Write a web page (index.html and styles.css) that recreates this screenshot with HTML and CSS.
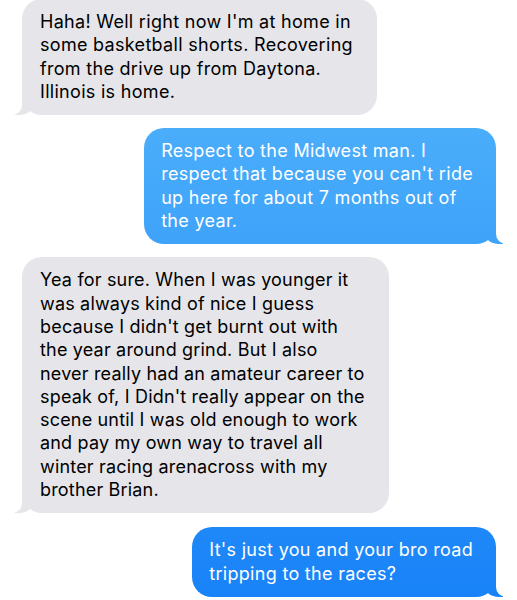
FILE: index.html
```html
<!DOCTYPE html>
<html>
<head>
<meta charset="utf-8">
<link rel="stylesheet" href="styles.css">
</head>
<body>
<div class="thread">
  <div class="bubble them first">Haha! Well right now I'm at home in<br>some basketball shorts. Recovering<br>from the drive up from Daytona.<br>Illinois is home.</div>
  <div class="bubble me">Respect to the Midwest man. I<br>respect that because you can't ride<br>up here for about 7 months out of<br>the year.</div>
  <div class="bubble them long">Yea for sure. When I was younger it<br>was always kind of nice I guess<br>because I didn't get burnt out with<br>the year around grind. But I also<br>never really had an amateur career to<br>speak of, I Didn't really appear on the<br>scene until I was old enough to work<br>and pay my own way to travel all<br>winter racing arenacross with my<br>brother Brian.</div>
  <div class="bubble me last">It's just you and your bro road<br>tripping to the races?</div>
</div>
</body>
</html>
```
FILE: styles.css
```css
html, body {
  margin: 0;
  padding: 0;
  background: #ffffff;
}
body {
  font-family: Inter, "Liberation Sans", sans-serif;
  font-size: 18px;
  line-height: 23.3px;
  width: 517px;
  height: 600px;
  overflow: hidden;
}
.thread {
  display: flex;
  flex-direction: column;
  gap: 13px;
  padding: 0 21px 0 22px;
}
.bubble {
  position: relative;
  white-space: nowrap;
  border-radius: 20px;
  padding: 11px 24px 12px 18px;
  letter-spacing: 0.3px;
}
.bubble.first {
  margin-top: -1px;
}
.bubble.long {
  letter-spacing: 0.18px;
}
.bubble.last {
  margin-top: 1px;
}
.them {
  align-self: flex-start;
  background: #e5e5ea;
  color: #000;
}
.me {
  align-self: flex-end;
  padding: 11px 23px 12px 17px;
  color: #fff;
  background: linear-gradient(to bottom, #58b9fb 0px, #1882f8 600px) fixed;
}
.bubble::before,
.bubble::after {
  content: "";
  position: absolute;
  bottom: 0;
  height: 20px;
}
.them::before {
  left: -7px;
  width: 20px;
  background: #e5e5ea;
  border-bottom-right-radius: 15px;
}
.them::after {
  left: -10px;
  width: 10px;
  background: #fff;
  border-bottom-right-radius: 10px;
}
.me::before {
  right: -7px;
  width: 20px;
  background: linear-gradient(to bottom, #58b9fb 0px, #1882f8 600px) fixed;
  border-bottom-left-radius: 15px;
}
.me::after {
  right: -10px;
  width: 10px;
  background: #fff;
  border-bottom-left-radius: 10px;
}
```
